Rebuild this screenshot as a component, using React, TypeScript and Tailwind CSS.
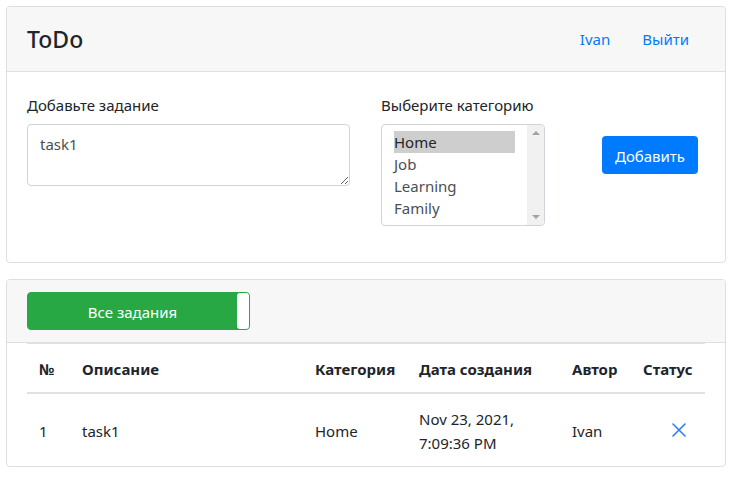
import React from "react";

const font = { fontFamily: '"Noto Sans", "Open Sans", sans-serif' };

function XIcon() {
  return (
    <svg width="14" height="14" viewBox="0 0 14 14" className="block">
      <path d="M1 1 L13 13 M13 1 L1 13" stroke="#2a7ff0" strokeWidth="1.6" strokeLinecap="round" />
    </svg>
  );
}

export default function App() {
  return (
    <div className="bg-white px-[6px] pt-[6px] pb-[11px] text-[15px] leading-[24px] text-[#212529]" style={font}>
      {/* Card 1 */}
      <div className="w-[720px] rounded-[4px] border border-[#dfdfdf]">
        <div className="flex h-[65px] items-center justify-between border-b border-[#dfdfdf] bg-[#f7f7f7] px-[20px] rounded-t-[3px]">
          <div className="text-[23px] font-medium leading-[29px] text-[#212529]">ToDo</div>
          <div className="flex">
            <span className="px-[16px] py-[8px] text-[#007bff]">Ivan</span>
            <span className="px-[16px] py-[8px] text-[#007bff]">Выйти</span>
          </div>
        </div>
        <div className="flex px-[20px] pt-[20px] pb-[20px]">
          <div className="w-[323px]">
            <div className="mb-[8px] pt-[1px] h-[24px]">Добавьте задание</div>
            <textarea
              readOnly
              defaultValue="task1"
              rows={2}
              className="block h-[62px] w-[323px] rounded-[4px] border border-[#ced4da] px-[12px] pt-[7px] pb-[5px] text-[#495057] outline-none"
            />
          </div>
          <div className="ml-[31px] w-[164px] pb-[16px]">
            <div className="mb-[8px] pt-[1px] h-[24px] whitespace-nowrap">Выберите категорию</div>
            <div className="flex h-[102px] w-[164px] overflow-hidden rounded-[4px] border border-[#ced4da]">
              <div className="flex-1 px-[12px] pt-[6px] text-[#495057]">
                <div className="h-[22px] leading-[23px] bg-[#cecece] text-[#212529]">Home</div>
                <div className="h-[22px] leading-[23px]">Job</div>
                <div className="h-[22px] leading-[23px]">Learning</div>
                <div className="h-[22px] leading-[23px]">Family</div>
              </div>
              <div className="flex w-[17px] flex-col items-center justify-between bg-[#f1f1f1] py-[6px]">
                <div className="h-0 w-0 border-x-[4px] border-b-[4px] border-x-transparent border-b-[#a3a3a3]" />
                <div className="h-0 w-0 border-x-[4px] border-t-[4px] border-x-transparent border-t-[#a3a3a3]" />
              </div>
            </div>
          </div>
          <div className="ml-[57px] pt-[44px]">
            <div className="flex h-[38px] w-[96px] items-center justify-center rounded-[4px] bg-[#007bff] pt-[1px] text-white">
              Добавить
            </div>
          </div>
        </div>
      </div>

      {/* Card 2 */}
      <div className="mt-[16px] w-[720px] rounded-[4px] border border-[#dfdfdf]">
        <div className="border-b border-[#dfdfdf] bg-[#f7f7f7] px-[20px] py-[12px] rounded-t-[3px]">
          <div className="flex h-[38px] w-[223px] rounded-[4px] border border-[#28a745] bg-[#28a745]">
            <div className="flex flex-1 items-center justify-center pt-[1px] text-white">Все задания</div>
            <div className="w-[12px] rounded-[3px] bg-white" />
          </div>
        </div>
        <div className="px-[20px]">
          <table className="w-[678px] table-fixed border-collapse text-left">
            <thead>
              <tr className="border-t border-[#dee2e6] border-b-2">
                <th className="w-[43px] px-[12px] pt-[13px] pb-[11px] font-bold">№</th>
                <th className="w-[233px] px-[12px] pt-[13px] pb-[11px] font-bold">Описание</th>
                <th className="w-[104px] px-[12px] pt-[13px] pb-[11px] font-bold">Категория</th>
                <th className="w-[153px] px-[12px] pt-[13px] pb-[11px] font-bold whitespace-nowrap">Дата создания</th>
                <th className="w-[71px] px-[12px] pt-[13px] pb-[11px] font-bold">Автор</th>
                <th className="px-[12px] pt-[13px] pb-[11px] font-bold">Статус</th>
              </tr>
            </thead>
            <tbody>
              <tr>
                <td className="px-[12px] pt-[13px] pb-[11px] align-middle">1</td>
                <td className="px-[12px] pt-[13px] pb-[11px] align-middle">task1</td>
                <td className="px-[12px] pt-[13px] pb-[11px] align-middle">Home</td>
                <td className="px-[12px] pt-[13px] pb-[11px] align-middle">
                  <div className="w-[110px]">Nov 23, 2021, 7:09:36 PM</div>
                </td>
                <td className="px-[12px] pt-[13px] pb-[11px] align-middle">Ivan</td>
                <td className="px-[12px] pt-[12px] pb-[12px] align-middle">
                  <div className="pl-[29px]">
                    <XIcon />
                  </div>
                </td>
              </tr>
            </tbody>
          </table>
        </div>
      </div>
    </div>
  );
}
